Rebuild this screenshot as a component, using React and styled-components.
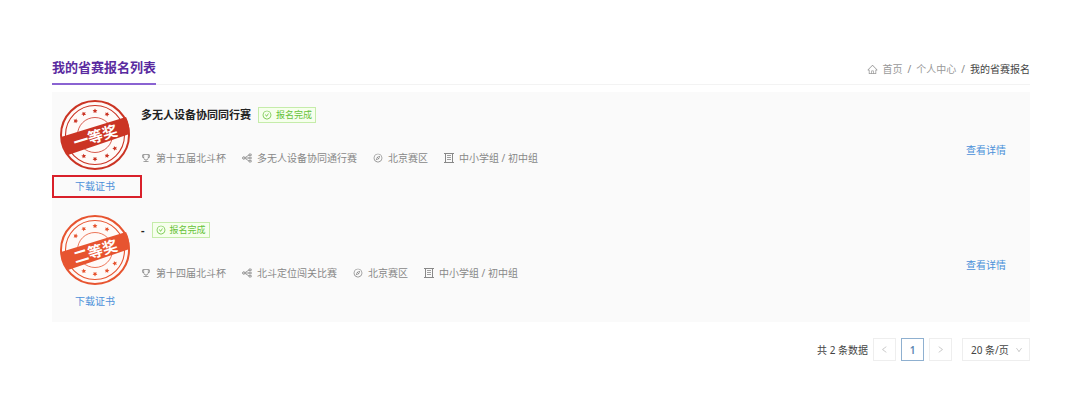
import React from 'react';
import styled, { createGlobalStyle } from 'styled-components';
import {
  AiOutlineTrophy,
  AiOutlineHome,
  AiOutlineCheckCircle,
  AiOutlineCompass,
  AiOutlineLeft,
  AiOutlineRight,
  AiOutlineDown,
} from 'react-icons/ai';

const GlobalStyle = createGlobalStyle`
  * { box-sizing: border-box; }
  body {
    margin: 0;
    background: #fff;
    color: #555;
    font: 10px/16px "Noto Sans", "Noto Sans CJK SC", sans-serif;
  }
  a { text-decoration: none; }
`;

const Page = styled.main`
  padding: 52px 50px 0 52px;
`;

const Header = styled.header`
  display: flex;
  justify-content: space-between;
  align-items: stretch;
  height: 33px;
  border-bottom: 1px solid #f3f3f3;
`;

const Title = styled.h1`
  margin: 0 0 -1px;
  font-size: 13px;
  line-height: 30px;
  color: #5a2ba0;
  border-bottom: 2px solid #8a63d2;
`;

const Crumbs = styled.nav`
  display: flex;
  align-items: center;
  gap: 5px;
  height: 34px;
  color: #888;

  a {
    display: flex;
    align-items: center;
    gap: 5px;
    color: #999;
  }
`;

const Current = styled.span`
  color: #444;
`;

const List = styled.ul`
  margin: 7px 0 0;
  padding: 0;
  list-style: none;
  background: #fafafa;
`;

const Item = styled.li`
  display: flex;
  height: 115px;
`;

const Award = styled.div`
  display: flex;
  flex-direction: column;
  align-items: center;
  gap: 5px;
  width: 86px;
  padding-top: 8px;
`;

const Download = styled.a`
  position: relative;
  width: 86px;
  line-height: 23px;
  text-align: center;
  color: #4a90d9;

  &::after {
    content: "";
    display: ${(props) => (props.$marked ? 'block' : 'none')};
    position: absolute;
    inset: 0 -4px 0 0;
    border: 2px solid #d9202a;
  }
`;

const Info = styled.div`
  flex: 1;
  padding: 15px 0 0 3px;
`;

const NameRow = styled.div`
  display: flex;
  align-items: center;
  gap: 7px;
  height: 16px;
`;

const Name = styled.h2`
  margin: 0;
  font-size: 11px;
  line-height: 16px;
  color: #222;
`;

const Tag = styled.span`
  display: flex;
  align-items: center;
  gap: 4px;
  height: 16px;
  padding: 0 3px;
  font-size: 9px;
  color: #67c23a;
  background: #f6ffed;
  border: 1px solid #c5ecaa;
`;

const Metas = styled.div`
  display: flex;
  gap: 16px;
  margin-top: 27px;
  color: #888;
`;

const Meta = styled.span`
  display: flex;
  align-items: center;
  gap: 5px;
`;

const Detail = styled.a`
  align-self: center;
  margin-right: 24px;
  color: #4a90d9;
`;

const Pager = styled.footer`
  display: flex;
  justify-content: flex-end;
  align-items: center;
  margin-top: 16px;
  color: #444;
`;

const PageButton = styled.button`
  display: flex;
  align-items: center;
  justify-content: center;
  width: 23px;
  height: 23px;
  margin-left: 5px;
  padding: 0;
  font: inherit;
  font-weight: 600;
  background: #fff;
  color: ${(props) => (props.$active ? '#5b84b0' : '#c4c4c4')};
  border: 1px solid ${(props) => (props.$active ? '#8fb0d0' : '#eee')};
`;

const SizeBox = styled.label`
  position: relative;
  margin-left: 10px;

  svg {
    position: absolute;
    top: 8px;
    right: 7px;
    color: #c0c0c0;
    pointer-events: none;
  }
`;

const SizeSelect = styled.select`
  display: block;
  appearance: none;
  width: 68px;
  height: 23px;
  padding: 0 8px;
  font: inherit;
  color: #444;
  background: #fff;
  border: 1px solid #eee;
  border-radius: 0;
`;

const entries = [
  {
    id: 1,
    award: '一等奖',
    color: '#cb3424',
    marked: true,
    name: '多无人设备协同同行赛',
    cup: '第十五届北斗杯',
    contest: '多无人设备协同通行赛',
    area: '北京赛区',
    group: '中小学组 / 初中组',
  },
  {
    id: 2,
    award: '二等奖',
    color: '#e75430',
    name: '-',
    cup: '第十四届北斗杯',
    contest: '北斗定位闯关比赛',
    area: '北京赛区',
    group: '中小学组 / 初中组',
  },
];

// angles of the stars above and below the ribbon
const starAngles = [-144, -118, -90, -60, 34, 60, 90, 118];

function Star({ angle, color }) {
  const rad = (angle * Math.PI) / 180;
  const x = 35 + 24 * Math.cos(rad);
  const y = 35 + 24 * Math.sin(rad);
  return (
    <path
      transform={`translate(${x} ${y}) rotate(${angle + 90})`}
      d="M0-2.4L.8-.9 2.4-.7 1.2.5 1.5 2.100 0 1.300-1.500 2.100-1.200.5-2.400-.7-.8-.9Z"
      fill={color}
    />
  );
}

function Seal({ text, color }) {
  return (
    <svg width="70" height="70" viewBox="0 0 70 70" role="img" aria-label={text}>
      <circle cx="35" cy="35" r="34" fill="#fffaf8" stroke={color} strokeWidth="2" />
      <g fill="none" stroke={color}>
        <circle cx="35" cy="35" r="29.5" strokeWidth="1.1" />
        <circle cx="35" cy="35" r="17.5" strokeWidth="0.8" />
      </g>
      {starAngles.map((angle) => (
        <Star key={angle} angle={angle} color={color} />
      ))}
      <path d="M1 37L66 17Q70 25 69.5 34L8 55Q2 47 1 37Z" fill={color} />
      <text
        x="35"
        y="42"
        fill="#fff"
        fontSize="15"
        fontWeight="700"
        textAnchor="middle"
        transform="rotate(-17 35 35)"
      >
        {text}
      </text>
    </svg>
  );
}

function ContestIcon() {
  return (
    <svg width="10" height="10" viewBox="0 0 10 10" fill="none" stroke="currentColor">
      <circle cx="1.8" cy="5" r="1.2" />
      <path d="M3 5h4M3.200 4.500L7 2M3.200 5.500L7 8" strokeWidth="0.8" />
      <path d="M7 1h2.200v1.600H7zM7 4.200h2.200v1.600H7zM7 7.400h2.200V9H7z" strokeWidth="0.8" />
    </svg>
  );
}

function GroupIcon() {
  return (
    <svg width="10" height="10" viewBox="0 0 10 10" fill="none" stroke="currentColor">
      <path d="M0 .5h10M1.5 .5v9M8.5 .5v9M0 9.5h10" />
      <path d="M3 2.500h4M3 4.500h4M3 6.500h4" strokeWidth="0.8" />
    </svg>
  );
}

function Entry({ entry }) {
  return (
    <Item>
      <Award>
        <Seal text={entry.award} color={entry.color} />
        <Download href="#" $marked={entry.marked}>下载证书</Download>
      </Award>
      <Info>
        <NameRow>
          <Name>{entry.name}</Name>
          <Tag><AiOutlineCheckCircle size={10} />报名完成</Tag>
        </NameRow>
        <Metas>
          <Meta><AiOutlineTrophy size={10} />{entry.cup}</Meta>
          <Meta><ContestIcon />{entry.contest}</Meta>
          <Meta><AiOutlineCompass size={10} />{entry.area}</Meta>
          <Meta><GroupIcon />{entry.group}</Meta>
        </Metas>
      </Info>
      <Detail href="#">查看详情</Detail>
    </Item>
  );
}

function App() {
  return (
    <>
      <GlobalStyle />
      <Page>
        <Header>
          <Title>我的省赛报名列表</Title>
          <Crumbs>
            <a href="#"><AiOutlineHome size={11} />首页</a>
            <span>/</span>
            <a href="#">个人中心</a>
            <span>/</span>
            <Current>我的省赛报名</Current>
          </Crumbs>
        </Header>
        <List>
          {entries.map((entry) => (
            <Entry key={entry.id} entry={entry} />
          ))}
        </List>
        <Pager>
          <span>共 2 条数据</span>
          <PageButton aria-label="上一页"><AiOutlineLeft size={9} /></PageButton>
          <PageButton $active>1</PageButton>
          <PageButton aria-label="下一页"><AiOutlineRight size={9} /></PageButton>
          <SizeBox>
            <SizeSelect aria-label="每页条数" defaultValue="20">
              <option value="10">10 条/页</option>
              <option value="20">20 条/页</option>
            </SizeSelect>
            <AiOutlineDown size={8} />
          </SizeBox>
        </Pager>
      </Page>
    </>
  );
}

export default App;
